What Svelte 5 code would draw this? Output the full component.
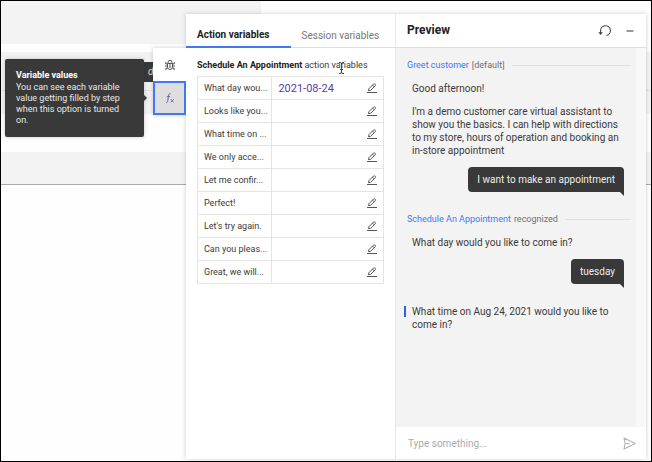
<script>
  const variables = [
    { step: 'What day wou...', value: '2021-08-24' },
    { step: 'Looks like you...', value: '' },
    { step: 'What time on ...', value: '' },
    { step: 'We only acce...', value: '' },
    { step: 'Let me confir...', value: '' },
    { step: 'Perfect!', value: '' },
    { step: "Let's try again.", value: '' },
    { step: 'Can you pleas...', value: '' },
    { step: 'Great, we will...', value: '' }
  ];
  const turns = [
    {
      action: 'Greet customer',
      note: '[default]',
      bot: [
        'Good afternoon!',
        "I'm a demo customer care virtual assistant to show you the basics. I can help with directions to my store, hours of operation and booking an in-store appointment"
      ],
      user: 'I want to make an appointment'
    },
    {
      action: 'Schedule An Appointment',
      note: 'recognized',
      bot: ['What day would you like to come in?'],
      user: 'tuesday'
    }
  ];
  let draft = $state('');
</script>

<main>
  <div class="backdrop" aria-hidden="true">
    <div class="band top"></div>
    <div class="band row"></div>
    <div class="band row second"></div>
    <div class="band foot"></div>
  </div>

  <div class="peek">d</div>

  <div class="dock">
    <div class="rail">
      <button aria-label="Debug">
        <svg width="12" height="12" viewBox="0 0 12 12" fill="none" stroke="#555" stroke-width="1">
          <path d="M3.5 4.500h5v3.500a2.500 2.500 0 0 1-5 0zM4 4.500V3.300a2 2 0 0 1 4 0v1.200M6 5v4M3.500 7H1M8.500 7H11M3.500 4.900H1.700V3M8.500 4.900h1.800V3M3.700 9.200H1.900V11M8.300 9.200h1.800V11" />
        </svg>
      </button>
      <button class="on" aria-label="Variable values" aria-describedby="tip">
        <svg width="10" height="10" viewBox="0 0 10 10" fill="none" stroke="#7a62b4" stroke-width="1">
          <path d="M1 9.500c1.200.2 1.500-.4 1.700-1.500l1-6C3.900.9 4.500.4 5.600.6M1.800 3.600h3.200M6 6.200l2.600 3.200M8.800 6.200 5.700 9.400" />
        </svg>
      </button>
      <div class="tip" id="tip" role="tooltip">
        <strong>Variable values</strong>
        <p>You can see each variable value getting filled by step when this option is turned on.</p>
      </div>
    </div>

    <section class="vars">
      <div class="tabs" role="tablist">
        <button role="tab" aria-selected="true">Action variables</button>
        <button role="tab" aria-selected="false">Session variables</button>
      </div>
      <div class="content">
        <h2><strong>Schedule An Appointment</strong> action variables</h2>
        <table>
          <tbody>
            {#each variables as item}
              <tr>
                <th scope="row">{item.step}</th>
                <td>
                  <div class="cell">
                    <span>{item.value}</span>
                    <button aria-label="Edit {item.step}">
                      <svg width="10" height="10" viewBox="0 0 10 10" fill="none" stroke="#444" stroke-width=".9">
                        <path d="M0 9.500h10M1.500 7.700l.4-2L6.700.900q.5-.4 1 0l.7.700q.4.5 0 1L3.600 7.300zM5.500 2.100l1.700 1.700" />
                      </svg>
                    </button>
                  </div>
                </td>
              </tr>
            {/each}
          </tbody>
        </table>
      </div>
      <svg class="caret" width="7" height="12" viewBox="0 0 7 12" fill="none" stroke="#444" stroke-width="1">
        <path d="M1 .5h1q1.500 0 1.500 1.500v8q0 1.500-1.500 1.500H1M6 .5H5Q3.500.5 3.500 2M6 11.500H5q-1.500 0-1.500-1.500M2 7.500h3" />
      </svg>
    </section>

    <section class="preview">
      <header>
        <h1>Preview</h1>
        <button aria-label="Restart">
          <svg width="13" height="12" viewBox="0 0 13 12" fill="none" stroke="#444" stroke-width="1.100">
            <path d="M8.500 10.400A4.900 4.900 0 1 0 2.600 5.700V9" />
            <path d="M.3 7.300h4.600L2.600 10z" fill="#444" stroke="none" />
          </svg>
        </button>
        <button aria-label="Minimize">
          <svg width="8" height="12" viewBox="0 0 8 12"><path d="M.5 6h7" stroke="#777" stroke-width="1.500" /></svg>
        </button>
      </header>
      <div class="body">
        <div class="chat">
          {#each turns as turn}
            <div class="divider"><a href="#action">{turn.action}</a><span>{turn.note}</span></div>
            {#each turn.bot as line}
              <p class="bot">{line}</p>
            {/each}
            <p class="user">{turn.user}</p>
          {/each}
          <p class="bot current">What time on Aug 24, 2021 would you like to come in?</p>
        </div>
        <div class="track"></div>
      </div>
      <form onsubmit={(e) => e.preventDefault()}>
        <input aria-label="Message" placeholder="Type something..." bind:value={draft} />
        <button aria-label="Send">
          <svg width="13" height="13" viewBox="0 0 13 13" fill="none" stroke="#b4b4b4" stroke-width="1.100" stroke-linejoin="round">
            <path d="M1 .9 12.200 6.500 1 12.100 2.100 6.500zM2.100 6.500h4.600" />
          </svg>
        </button>
      </form>
    </section>
  </div>
</main>

<style>
  :global(body) { margin: 0; }
  * { box-sizing: border-box; }
  main {
    position: relative;
    min-height: 100vh;
    border: 1px solid #000;
    background: #fefefe;
    overflow: hidden;
    font: 10px/13px Roboto, sans-serif;
    color: #3a3a3a;
  }
  h1, h2, p { margin: 0; font-weight: 400; }
  button {
    margin: 0;
    padding: 0;
    border: 0;
    background: none;
    font: inherit;
    color: inherit;
    display: flex;
    align-items: center;
    justify-content: center;
  }
  svg { display: block; }
  .band { background: #f3f3f3; }
  .top { width: 40%; height: 43px; margin-bottom: 8px; }
  .row { height: 39px; border-bottom: 1px solid #e4e4e4; }
  .second { height: 23px; border: 0; margin-bottom: 38px; }
  .foot { height: 33px; border-bottom: 1px solid #aaa; }
  .peek {
    position: absolute;
    left: 142px;
    top: 61px;
    width: 20px;
    height: 20px;
    padding: 3px 5px;
    background: #393939;
    color: #ddd;
    font-style: italic;
  }
  .dock {
    position: absolute;
    inset: 13px 5px 2px 152px;
    display: grid;
    grid-template-columns: 33px 209fr 251fr;
    filter: drop-shadow(0 0 2px rgba(0, 0, 0, .2));
  }
  .rail {
    position: relative;
    align-self: start;
    margin-top: 34px;
    background: #fff;
  }
  .rail button { width: 100%; height: 33px; }
  .rail .on { height: 34px; border: 2px solid #4078f5; background: #dedede; }
  .tip {
    position: absolute;
    right: calc(100% + 9px);
    top: 11px;
    width: 139px;
    padding: 11px;
    border-radius: 2px;
    background: #393939;
    color: #e8e8e8;
    font-size: 9px;
    line-height: 11px;
  }
  .tip strong { display: block; margin-bottom: 1px; font-weight: 700; color: #fff; }
  .tip p { padding-right: 10px; }
  .tip::after {
    content: "";
    position: absolute;
    left: 100%;
    top: 36px;
    border: 3px solid transparent;
    border-left-color: #393939;
  }
  .vars { position: relative; background: #fff; }
  .tabs { display: flex; height: 34px; }
  .tabs button {
    flex: 1 1 0;
    justify-content: flex-start;
    padding: 9px 0 0 11px;
    border-bottom: 1px solid #ddd;
    color: #777;
  }
  .tabs [aria-selected="true"] {
    border-bottom: 2px solid #4078f5;
    color: #222;
    font-weight: 700;
  }
  .content { padding: 11px; }
  h2 { font-size: 9px; line-height: 12px; margin-bottom: 5px; white-space: nowrap; }
  h2 strong { font-weight: 700; color: #222; }
  table { width: 100%; border-collapse: collapse; table-layout: fixed; font-size: 9px; }
  th, td { height: 23px; padding: 0 6px; border: 1px solid #e4e4e4; }
  th { width: 40%; text-align: left; font-weight: 400; white-space: nowrap; }
  .cell { display: flex; align-items: center; justify-content: space-between; }
  .cell span { font-size: 11px; color: #5c3d9e; }
  .caret { position: absolute; left: 152px; top: 48px; }
  .preview {
    display: flex;
    flex-direction: column;
    min-width: 0;
    border-left: 1px solid #e8e8e8;
    background: #fff;
  }
  header {
    display: flex;
    align-items: center;
    height: 34px;
    padding: 0 12px 0 11px;
    gap: 15px;
    border-bottom: 1px solid #ddd;
  }
  h1 { flex: 1; font-size: 12px; font-weight: 700; color: #222; }
  .body { flex: 1; display: flex; background: #f3f3f3; }
  .chat { flex: 1; padding: 11px 11px 0; }
  .track { width: 10px; background: #f8f8f8; }
  .divider {
    display: flex;
    align-items: center;
    gap: 3px;
    margin-right: -6px;
    font-size: 9px;
    color: #6f6f6f;
  }
  .divider::after { content: ""; flex: 1; height: 1px; margin-left: 4px; background: #e0e0e0; }
  a { color: #4078f5; text-decoration: none; }
  .bot { position: relative; margin-top: 10px; padding-left: 5px; }
  .user {
    position: relative;
    width: fit-content;
    margin: 10px 1px 21px auto;
    padding: 6px 9px;
    border-radius: 4px 4px 0 4px;
    background: #393939;
    color: #eee;
  }
  .user::after {
    content: "";
    position: absolute;
    right: 0;
    top: 100%;
    border-top: 4px solid #393939;
    border-left: 4px solid transparent;
  }
  .current::before {
    content: "";
    position: absolute;
    left: -3px;
    top: 1px;
    width: 2px;
    height: 11px;
    background: #2463f0;
  }
  form { display: flex; height: 32px; padding: 0 10px 0 12px; }
  input {
    flex: 1;
    min-width: 0;
    padding: 0;
    border: 0;
    background: none;
    font: inherit;
    color: inherit;
  }
  input::placeholder { color: #aaa; opacity: 1; }
</style>
